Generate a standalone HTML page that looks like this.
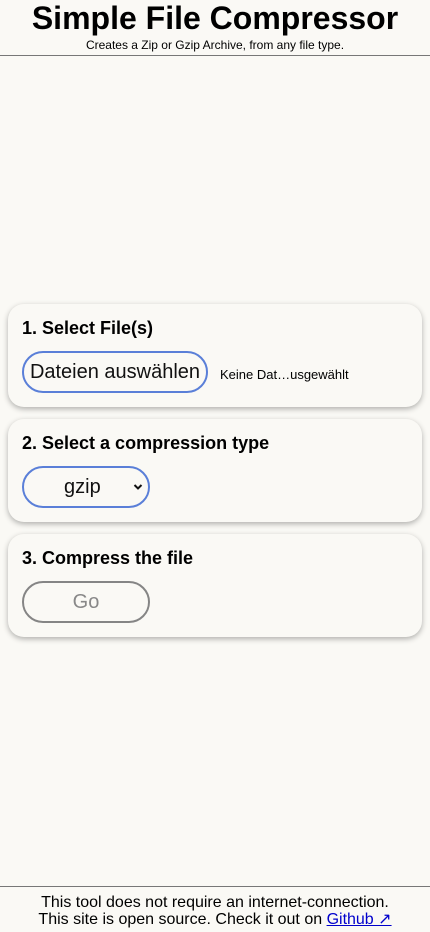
<!DOCTYPE html>
<html><head><meta charset="utf-8"><style>
html,body{margin:0;padding:0;background:#faf9f5;font-family:"Liberation Sans",Arial,sans-serif;color:#000;}
body{width:430px;height:932px;position:relative;overflow:hidden}
.hdr{position:absolute;top:0;left:0;width:430px;height:55px;border-bottom:1px solid #777;text-align:center}
.hdr h1{margin:0;font-size:32px;line-height:36px;padding-top:0px;font-weight:bold}
.hdr p{margin:0;font-size:12px;line-height:14px;margin-top:2px}
.card{position:absolute;left:8px;width:414px;height:103px;border-radius:16px;background:#faf9f5;box-shadow:0 2px 6px rgba(0,0,0,.3)}
.card h2{position:absolute;left:14px;top:14px;margin:0;font-size:18px;line-height:20px;font-weight:bold}
.btn{position:absolute;left:14px;top:47px;height:38px;border:2px solid #5a7fd8;border-radius:21px;box-sizing:content-box;font-size:20px;line-height:38px;text-align:center;color:#111}
.ftr{position:absolute;top:886px;left:0;width:430px;border-top:1px solid #777;text-align:center;font-size:16px;line-height:17px;padding-top:7px}
a{color:#0000cc;text-decoration:underline}
</style></head><body>
<div class="hdr"><h1>Simple File Compressor</h1><p>Creates a Zip or Gzip Archive, from any file type.</p></div>
<div class="card" style="top:304px"><h2>1. Select File(s)</h2>
<div class="btn" style="width:182px">Dateien auswählen</div>
<div style="position:absolute;left:212px;top:64px;font-size:13px;line-height:14px">Keine Dat…usgewählt</div></div>
<div class="card" style="top:419px"><h2>2. Select a compression type</h2>
<div class="btn" style="width:124px"><span style="position:absolute;left:40px">gzip</span>
<svg style="position:absolute;left:109px;top:15px" width="10" height="8" viewBox="0 0 10 8"><path d="M1.5 2 L5 5.5 L8.5 2" stroke="#111" stroke-width="2" fill="none"/></svg></div></div>
<div class="card" style="top:534px"><h2>3. Compress the file</h2>
<div class="btn" style="width:124px;border-color:#858585;color:#888">Go</div></div>
<div class="ftr">This tool does not require an internet-connection.<br>This site is open source. Check it out on <a>Github ↗</a></div>
</body></html>
